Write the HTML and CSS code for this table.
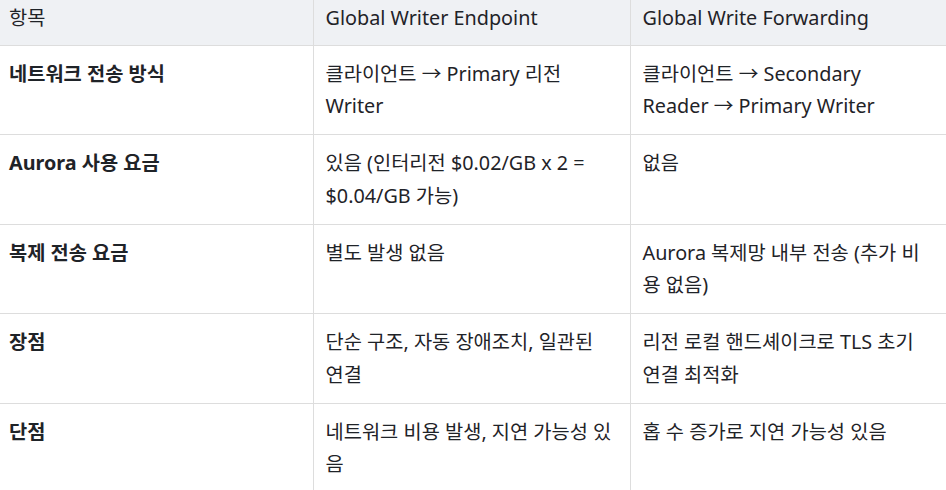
FILE: index.html
```html
<!DOCTYPE html>
<html lang="ko">
<head>
<meta charset="utf-8">
<link rel="stylesheet" href="styles.css">
</head>
<body>
<table class="cmp">
  <colgroup>
    <col class="c1"><col class="c2"><col class="c3">
  </colgroup>
  <thead>
    <tr><th>항목</th><th>Global Writer Endpoint</th><th>Global Write Forwarding</th></tr>
  </thead>
  <tbody>
    <tr><td class="key">네트워크 전송 방식</td><td>클라이언트 → Primary 리전<br>Writer</td><td>클라이언트 → Secondary<br>Reader → Primary Writer</td></tr>
    <tr><td class="key">Aurora 사용 요금</td><td>있음 (인터리전 $0.02/GB x 2 =<br>$0.04/GB 가능)</td><td>없음</td></tr>
    <tr><td class="key">복제 전송 요금</td><td>별도 발생 없음</td><td>Aurora 복제망 내부 전송 (추가 비<br>용 없음)</td></tr>
    <tr><td class="key">장점</td><td>단순 구조, 자동 장애조치, 일관된<br>연결</td><td>리전 로컬 핸드셰이크로 TLS 초기<br>연결 최적화</td></tr>
    <tr><td class="key">단점</td><td>네트워크 비용 발생, 지연 가능성 있<br>음</td><td>홉 수 증가로 지연 가능성 있음</td></tr>
  </tbody>
</table>
</body>
</html>
```
FILE: styles.css
```css
html, body {
  margin: 0;
  padding: 0;
  background: #ffffff;
}
body {
  font-family: "Noto Sans", "Noto Sans CJK KR", sans-serif;
  font-size: 19.8px;
  color: #1f2328;
}
.cmp {
  width: 946px;
  table-layout: fixed;
  border-collapse: collapse;
}
.c1 { width: 313px; }
.c2 { width: 317px; }
.c3 { width: 316px; }
.cmp th, .cmp td {
  text-align: left;
  vertical-align: top;
  line-height: 32.25px;
  padding: 12px;
  border-bottom: 1px solid #dddddd;
  border-left: 1px solid #dddddd;
  white-space: nowrap;
}
.cmp th:first-child, .cmp td:first-child {
  border-left: none;
  padding-left: 9px;
}
.cmp th {
  font-weight: 400;
  background: #eff1f4;
  padding-top: 1.5px;
  padding-bottom: 11px;
}
.cmp td.key {
  font-weight: 700;
}
```
